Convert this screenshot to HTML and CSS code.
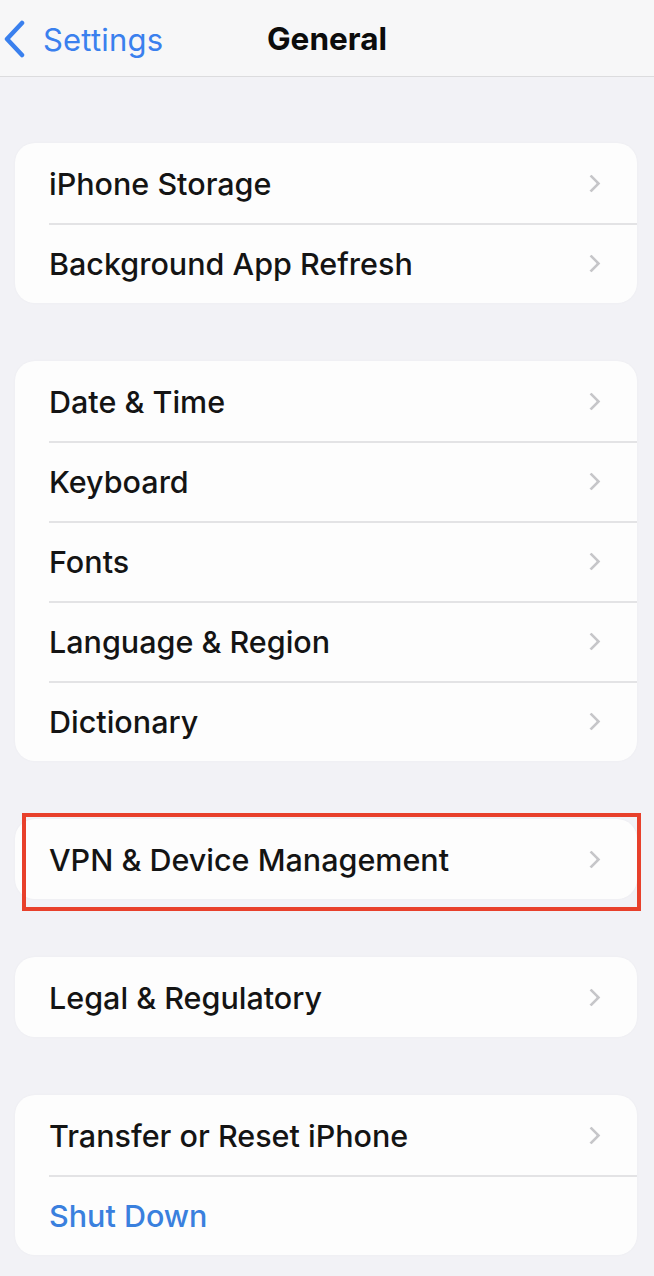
FILE: index.html
```html
<!DOCTYPE html>
<html>
<head>
<meta charset="utf-8">
<link rel="stylesheet" href="styles.css">
</head>
<body>
<header class="nav">
  <div class="back">
    <svg class="back-icon" width="24" height="38" viewBox="0 0 24 38"><path d="M19 3 L4 19 L19 35" fill="none" stroke="#3a80ee" stroke-width="4.5" stroke-linecap="round" stroke-linejoin="round"/></svg>
    <span class="back-label">Settings</span>
  </div>
  <h1 class="title">General</h1>
</header>
<main class="content">
  <section class="group">
    <div class="row"><span class="label">iPhone Storage</span><span class="chev"></span></div>
    <div class="row"><span class="label">Background App Refresh</span><span class="chev"></span></div>
  </section>
  <section class="group">
    <div class="row"><span class="label">Date &amp; Time</span><span class="chev"></span></div>
    <div class="row"><span class="label">Keyboard</span><span class="chev"></span></div>
    <div class="row"><span class="label">Fonts</span><span class="chev"></span></div>
    <div class="row"><span class="label">Language &amp; Region</span><span class="chev"></span></div>
    <div class="row"><span class="label">Dictionary</span><span class="chev"></span></div>
  </section>
  <section class="group highlighted">
    <div class="row"><span class="label">VPN &amp; Device Management</span><span class="chev"></span></div>
    <div class="highlight"></div>
  </section>
  <section class="group">
    <div class="row"><span class="label">Legal &amp; Regulatory</span><span class="chev"></span></div>
  </section>
  <section class="group">
    <div class="row"><span class="label">Transfer or Reset iPhone</span><span class="chev"></span></div>
    <div class="row"><span class="label blue">Shut Down</span></div>
  </section>
</main>
</body>
</html>
```
FILE: styles.css
```css
* { box-sizing: border-box; }
html, body { margin: 0; padding: 0; }
body {
  width: 654px;
  height: 1276px;
  overflow: hidden;
  background: #f2f2f6;
  font-family: Inter, "Noto Sans", sans-serif;
  color: #141414;
}
.nav {
  height: 77px;
  background: #f7f7f8;
  border-bottom: 1px solid #dcdcde;
  display: flex;
  align-items: center;
  justify-content: center;
  position: relative;
}
.back {
  position: absolute;
  left: 3px;
  top: 20px;
  display: flex;
  align-items: center;
  gap: 16px;
}
.back-label {
  color: #3a80ee;
  font-size: 31px;
  font-weight: 400;
  letter-spacing: 0.2px;
}
.title {
  margin: 0;
  font-size: 31.5px;
  font-weight: 700;
  color: #0c0c0c;
}
.content {
  padding: 66px 17px 0 15px;
  display: flex;
  flex-direction: column;
  gap: 58px;
}
.group {
  background: #fdfdfd;
  border-radius: 20px;
  box-shadow: 0 0 3px rgba(0,0,0,0.03);
  position: relative;
}
.row {
  height: 80px;
  display: flex;
  align-items: center;
  justify-content: space-between;
  padding: 0 37px 0 34px;
  position: relative;
}
.row + .row::before {
  content: "";
  position: absolute;
  top: 0;
  left: 34px;
  right: 0;
  height: 1.5px;
  background: #e3e3e5;
}
.label {
  font-size: 30.5px;
  font-weight: 500;
  letter-spacing: 0;
}
.label.blue { color: #3a80de; font-weight: 500; }
.chev {
  width: 13px;
  height: 13px;
  border-top: 3px solid #c6c6c9;
  border-right: 3px solid #c6c6c9;
  transform: rotate(45deg);
  margin-right: 2px;
  border-radius: 1px;
}
.highlight {
  position: absolute;
  left: 7px;
  right: -4px;
  top: -6px;
  bottom: -12px;
  border: 4px solid #e8402b;
}
```
